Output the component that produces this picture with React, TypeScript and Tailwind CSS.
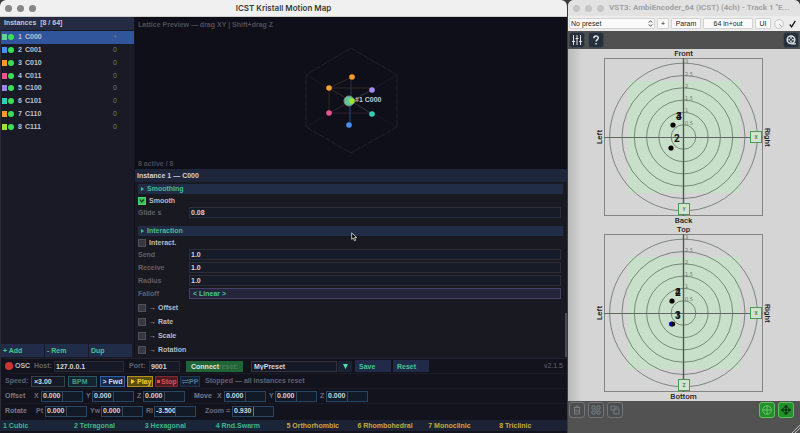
import React from "react";

const instances = [
  { name: "C000", color: "bg-[#5fd39a]", value: "+" },
  { name: "C001", color: "bg-[#4a90f0]", value: "0" },
  { name: "C010", color: "bg-[#f59a2c]", value: "0" },
  { name: "C011", color: "bg-[#e8558c]", value: "0" },
  { name: "C100", color: "bg-[#9b83f0]", value: "0" },
  { name: "C101", color: "bg-[#30cdb8]", value: "0" },
  { name: "C110", color: "bg-[#f59a2c]", value: "0" },
  { name: "C111", color: "bg-[#a2e036]", value: "0" },
];

const lattices = [
  "1 Cubic",
  "2 Tetragonal",
  "3 Hexagonal",
  "4 Rnd.Swarm",
  "5 Orthorhombic",
  "6 Rhombohedral",
  "7 Monoclinic",
  "8 Triclinic",
];

function TrafficLights({ color }: { color: string }) {
  return (
    <div className="flex gap-[5px]">
      {[0, 1, 2].map((i) => (
        <span key={i} className={"size-[7px] rounded-full " + color} />
      ))}
    </div>
  );
}

function Sidebar() {
  return (
    <aside className="flex w-[134px] shrink-0 flex-col border-l border-[#2c2c38] bg-[#191a25] pr-[2px]">
      <h2 className="-mr-[2px] h-[13px] bg-[#242b43] pl-[3px] leading-[12px] whitespace-pre text-[#c3c6d0]">
        Instances  [8 / 64]
      </h2>
      <ul className="mt-px -mr-[2px] grid h-[102px] grid-rows-8">
        {instances.map((item, i) => (
          <li key={item.name} className="min-h-0">
            <button
              className={
                "flex h-full w-full items-center pl-px text-left text-[#c0c2cc] " +
                (i === 0 ? "bg-[#30559b]" : "")
              }
            >
              <span className={"h-[6px] w-[5px] " + item.color} />
              <span className="ml-px size-[6px] rounded-full bg-[#3ddc5a]" />
              <span className="ml-[4px] w-[7px]">{i + 1}</span>
              <span>{item.name}</span>
              <span className="mr-[17px] ml-auto font-normal text-[#777988]">{item.value}</span>
            </button>
          </li>
        ))}
      </ul>
      <div className="mt-auto mb-px grid h-[13px] grid-cols-3 gap-px">
        {["+ Add", "- Rem", "Dup"].map((t) => (
          <button key={t} className="bg-[#212c49] pl-[2px] text-left leading-[12px] text-[#49c494]">
            {t}
          </button>
        ))}
      </div>
    </aside>
  );
}

const nodes = [
  { x: 61, y: 46, c: "#f59a2c" },
  { x: 38, y: 57, c: "#f5a02c" },
  { x: 81, y: 59, c: "#a58cf5" },
  { x: 38, y: 82, c: "#e8558c" },
  { x: 81, y: 83, c: "#30cdb8" },
  { x: 58, y: 94, c: "#4a90f0" },
];

function LatticePreview() {
  return (
    <section className="flex flex-col bg-[#0f0f1a] px-[3px] pt-px">
      <p className="h-[13px] leading-[13px] text-[#4c4d58]">Lattice Preview — drag XY | Shift+drag Z</p>
      <svg viewBox="0 0 120 126" className="mx-auto h-[126px] w-[120px]" aria-label="Lattice">
        <g fill="none" stroke="#22222e">
          <polygon points="60,17 106,44 106,96 60,122 15,96 15,44" strokeDasharray="6 1" />
          <path d="M15 44 60 70 106 44M15 96 60 70 106 96" stroke="#181823" />
        </g>
        <path d="M38 57 61 46M38 57V82M38 57H81M38 57 60 70" stroke="#30281f" fill="none" />
        <path d="M38 82H81M38 82 60 70" stroke="#2c2028" fill="none" />
        <path d="M60 46V70M60 70 81 83M60 70 81 59" stroke="#2b3340" fill="none" />
        <path d="M59 70V94" stroke="#264e7c" fill="none" />
        {nodes.map((n) => (
          <circle key={n.x + "-" + n.y} cx={n.x} cy={n.y} r="2.8" fill={n.c} />
        ))}
        <circle cx="58" cy="70" r="5" fill="#5fc99a" stroke="#77857f" />
        <circle cx="61" cy="70" r="2.8" fill="#a2e036" />
        <text x="64" y="71" fontSize="7" fill="#c8cad0" fontWeight="bold">
          #1 C000
        </text>
      </svg>
      <p className="h-[12px] leading-[14px] text-[#464752]">8 active / 8</p>
    </section>
  );
}

function SectionBar({ children }: { children: string }) {
  return (
    <h3 className="flex h-[10px] items-center gap-[3px] bg-[#212c47] pl-[3px] text-[#46bd90]">
      <svg viewBox="0 0 3 4" className="h-[4px] w-[3px]">
        <path d="M0 0 3 2 0 4z" fill="currentColor" />
      </svg>
      {children}
    </h3>
  );
}

function Check({ label, checked = false }: { label: string; checked?: boolean }) {
  return (
    <label className="flex h-[13px] items-center gap-[3px] text-[#b9bbc3]">
      <span className="relative flex size-[8px]">
        <input
          type="checkbox"
          defaultChecked={checked}
          className="peer size-[8px] appearance-none border border-[#50505a] bg-[#37373f] checked:border-[#45d268] checked:bg-[#38c95a]"
        />
        <svg viewBox="0 0 8 8" className="pointer-events-none absolute inset-0 hidden peer-checked:block">
          <path d="M2 2.5 3.7 5 6 2.5" stroke="#123b1c" strokeWidth="1.3" fill="none" />
        </svg>
      </span>
      {label}
    </label>
  );
}

function Param({ label, value }: { label: string; value: string }) {
  return (
    <label className="flex h-[11px] items-center text-[#5f606c]">
      <span className="w-[51px]">{label}</span>
      <input
        defaultValue={value}
        className="h-[11px] min-w-0 flex-1 border border-[#2b2d39] bg-[#171b28] px-px text-[#d5d7dc]"
      />
    </label>
  );
}

function Inspector() {
  return (
    <section className="relative flex-1 bg-[#191922]">
      <h2 className="h-[14px] border-b border-[#171b26] bg-[#202639] pl-[2px] leading-[14px] text-[#d0d2d8]">
        Instance 1 — C000
      </h2>
      <div className="flex flex-col pr-[4px] pl-[3px]">
        <div className="pt-px">
          <SectionBar>Smoothing</SectionBar>
        </div>
        <div className="pr-[2px] pb-[8px]">
          <Check label="Smooth" checked />
          <Param label="Glide s" value="0.08" />
        </div>
        <SectionBar>Interaction</SectionBar>
        <div className="flex flex-col pr-[2px]">
          <Check label="Interact." />
          <div className="flex flex-col gap-[2px]">
            <Param label="Send" value="1.0" />
            <Param label="Receive" value="1.0" />
            <Param label="Radius" value="1.0" />
            <label className="flex h-[11px] items-center text-[#5f606c]">
              <span className="w-[51px]">Falloff</span>
              <select className="h-[11px] min-w-0 flex-1 appearance-none border border-[#433f66] bg-[#24243a] px-[3px] leading-[9px] text-[#49c494]">
                <option>&lt; Linear &gt;</option>
              </select>
            </label>
          </div>
        </div>
        <div className="flex flex-col gap-px pt-[2px]">
          {["Offset", "Rate", "Scale", "Rotation"].map((t) => (
            <Check key={t} label={"→ " + t} />
          ))}
        </div>
      </div>
      <span className="absolute right-0 bottom-px h-[44px] w-[2px] bg-[#4b4b55]" />
      <svg viewBox="0 0 8 11" className="absolute top-[63px] left-[216px] h-[10px] w-[7px]">
        <path d="M.8.8V8.2L2.6 6.6 4 9.8 5.4 9.2 4.1 6.1H6.6z" fill="#050505" stroke="#e6e6e6" strokeWidth=".9" />
      </svg>
    </section>
  );
}

function Num({
  label,
  value,
  labelClass,
  caret = false,
}: {
  label: string;
  value: string;
  labelClass: string;
  caret?: boolean;
}) {
  return (
    <label className="flex items-center text-[#6b6d7a]">
      <span className={labelClass}>{label}</span>
      <span className="flex h-[11px] w-[42px] border border-[#264663] bg-[#121a28]">
        <input
          defaultValue={value}
          className={
            "h-[9px] w-[21px] border-r bg-transparent pl-px text-[#d5d7dc] " +
            (caret ? "border-[#c2503f]" : "border-[#33475d]")
          }
        />
      </span>
    </label>
  );
}

function Transport() {
  return (
    <div className="border-l border-[#2c2c38] bg-[#13131d] pb-[2px] pl-[4px]">
      <div className="flex h-[15px] items-center border-t border-[#22222e] text-[#60626e]">
        <span className="size-[8px] rounded-full bg-[#c93535]" />
        <span className="ml-[2px] w-[19px] text-[#b9bbc3]">OSC</span>
        <label className="flex items-center">
          <span className="w-[20px]">Host:</span>
          <input defaultValue="127.0.0.1" className="h-[11px] w-[70px] border border-[#2a2b37] bg-[#151a26] px-px text-[#d5d7dc]" />
        </label>
        <label className="ml-[5px] flex items-center">
          <span className="w-[20px]">Port:</span>
          <input defaultValue="9001" className="h-[11px] w-[31px] border border-[#2a2b37] bg-[#151a26] px-px text-[#d5d7dc]" />
        </label>
        <button className="ml-[6px] h-[11px] w-[57px] bg-[#1f6535] pl-[5px] text-left leading-[11px] text-[#dfe6e0]">
          Connect<span className="text-[#4b7a59]">reset:</span>
        </button>
        <input
          aria-label="Preset"
          defaultValue="MyPreset"
          className="ml-[8px] h-[11px] w-[86px] border border-[#33343f] bg-[#151a26] px-[2px] text-[#d5d7dc]"
        />
        <button aria-label="Open preset list" className="ml-px flex h-[11px] w-[14px] items-center justify-center bg-[#1b2234]">
          <svg viewBox="0 0 5 5" className="size-[5px]">
            <path d="M0 0H5L2.5 5z" fill="#4fe0ae" />
          </svg>
        </button>
        <button className="ml-[3px] h-[12px] w-[36px] bg-[#212b49] pl-[4px] text-left leading-[11px] text-[#49c494]">Save</button>
        <button className="ml-[2px] h-[12px] w-[36px] bg-[#212b49] pl-[4px] text-left leading-[11px] text-[#49c494]">Reset</button>
        <span className="mr-[4px] ml-auto font-normal">v2.1.5</span>
      </div>
      <div className="flex h-[15px] items-center border-t border-[#1b1b27] text-[#60626e]">
        <label className="flex items-center">
          <span className="w-[26px]">Speed:</span>
          <input defaultValue="×3.00" className="h-[11px] w-[34px] border border-[#34424c] bg-[#151a26] px-[2px] text-[#d5d7dc]" />
        </label>
        <button className="ml-[3px] h-[11px] w-[29px] border border-[#2c5563] bg-[#152230] pl-[3px] text-left leading-[9px] text-[#459b8c]">BPM</button>
        <button className="ml-[3px] h-[11px] w-[25px] border border-[#31619f] bg-[#16284a] text-center leading-[9px] whitespace-nowrap text-[#d5dcea]">
          &gt; Fwd
        </button>
        <button className="ml-[2px] flex h-[11px] w-[26px] items-center gap-[2px] border border-[#b3921c] bg-[#5c4b0e] pl-[3px] leading-[9px] text-[#f2cf27]">
          <svg viewBox="0 0 4 5" className="h-[5px] w-[4px]"><path d="M0 0 4 2.5 0 5z" fill="currentColor" /></svg>
          Play
        </button>
        <button className="ml-[2px] flex h-[11px] w-[23px] items-center gap-px border border-[#7e2a34] bg-[#4d1a22] pl-px leading-[9px] text-[#e04f4f]">
          <span className="size-[3px] shrink-0 bg-current" />
          Stop
        </button>
        <button className="ml-[2px] flex h-[11px] w-[20px] items-center border border-[#21344d] bg-[#141e2e] pl-px leading-[9px] text-[#55779a]">
          <svg viewBox="0 0 7 5" className="h-[5px] w-[7px] shrink-0">
            <path d="M0 1.5H6.5L5 .3M7 3.5H.5L2 4.7" fill="none" stroke="currentColor" strokeWidth=".8" />
          </svg>
          PP
        </button>
        <span className="ml-[5px]">Stopped — all instances reset</span>
      </div>
      <div className="flex h-[15px] items-center border-t border-[#1b1b27] text-[#7a7c88]">
        <span className="w-[29px]">Offset</span>
        <Num label="X" value="0.000" labelClass="w-[7px]" />
        <Num label="Y" value="0.000" labelClass="ml-[3px] w-[6px]" />
        <Num label="Z" value="0.000" labelClass="ml-[3px] w-[6px]" />
        <span className="ml-[9px] w-[23px]">Move</span>
        <Num label="X" value="0.000" labelClass="w-[7px]" />
        <Num label="Y" value="0.000" labelClass="ml-[3px] w-[6px]" />
        <Num label="Z" value="0.000" labelClass="ml-[3px] w-[6px]" />
      </div>
      <div className="flex h-[15px] items-center border-t border-[#1b1b27] text-[#7a7c88]">
        <span className="w-[31px]">Rotate</span>
        <Num label="Pt" value="0.000" labelClass="w-[9px]" />
        <Num label="Yw" value="0.000" labelClass="ml-[3px] w-[11px]" />
        <Num label="Rl" value="-3.500" labelClass="ml-[3px] w-[8px]" />
        <Num label="Zoom =" value="0.930" labelClass="ml-[9px] w-[27px]" caret />
      </div>
    </div>
  );
}

function MotionMap() {
  return (
    <main className="flex min-w-0 flex-1 flex-col overflow-hidden rounded-t-[6px] bg-[#13131d] font-['Liberation_Sans',Arial,sans-serif] text-[7px] leading-[10px] font-bold">
      <header className="grid h-[17px] grid-cols-[1fr_auto_1fr] items-center border-b border-[#cfcfcf] bg-[#f0f0f0] px-[5px]">
        <TrafficLights color="bg-[#878787]" />
        <h1 className="font-['Inter',sans-serif] text-[8px] leading-[16px] font-semibold text-[#3a3a3a]">ICST Kristall Motion Map</h1>
      </header>
      <div className="flex flex-1">
        <Sidebar />
        <div className="ml-px flex min-w-0 flex-1 flex-col">
          <LatticePreview />
          <Inspector />
        </div>
      </div>
      <Transport />
      <nav className="mb-[2px] grid h-[11px] grid-cols-8">
        {lattices.map((t, i) => (
          <button
            key={t}
            className={
              "pl-[3px] text-left leading-[10px] whitespace-nowrap " +
              (i < 4 ? "bg-[#1a2538] text-[#3fb58d]" : "bg-[#1c2133] text-[#c9a93b]")
            }
          >
            {t}
          </button>
        ))}
      </nav>
    </main>
  );
}

type Source = { x: number; y: number; label: string; ghost?: string; lx: number; ly: number; blue?: boolean };

function Radar({ top, bottom, handle, sources }: { top: string; bottom: string; handle: string; sources: Source[] }) {
  const rings = [1, 2, 3, 4, 5, 6];
  return (
    <figure className="grid grid-cols-[1fr_159px_1fr] grid-rows-[9px_158px_9px] pr-px font-['Roboto',sans-serif] text-[8px] leading-[9px] font-medium text-[#222]">
      <span className="col-start-2 text-center">{top}</span>
      <span className="col-start-1 row-start-2 rotate-180 justify-self-end text-center [writing-mode:vertical-rl]">Left</span>
      <svg viewBox="0 0 159 158" className="col-start-2 row-start-2 h-[158px] w-[159px]">
        <rect x=".5" y=".5" width="158" height="157" fill="none" stroke="#858585" />
        <rect x="24" y="23" width="112" height="112" fill="#c8dfc9" />
        <g fill="none" stroke="#4d5a50" strokeOpacity=".65">
          {rings.map((k) => (
            <circle key={k} cx="79.5" cy="79" r={k * 12.3} />
          ))}
        </g>
        <path d="M0 79.5H159" stroke="#5d685f" />
        <path d="M79.5 0V158" stroke="#4f5a52" strokeWidth="1.4" />
        <g fontSize="5" fontWeight="400" fill="#6b746d" fontFamily="DejaVu Sans, sans-serif">
          {rings.map((k) => (
            <text key={k} x="81" y={79 - k * 12.3}>
              {k / 2}
            </text>
          ))}
        </g>
        {sources.map((s) => (
          <g key={s.label}>
            <circle cx={s.x} cy={s.y} r="2.6" fill="#000" />
            {s.blue && <circle cx={s.x - 1} cy={s.y} r="2.2" fill="#1010d8" />}
            {s.blue && <circle cx={s.x + 1} cy={s.y} r="2.2" fill="#000" />}
            <text x={s.lx} y={s.ly} fontSize="10" fontWeight="700" fill="#111">{s.label}</text>
            {s.ghost && <text x={s.lx} y={s.ly} fontSize="10" fontWeight="500" fill="#111">{s.ghost}</text>}
          </g>
        ))}
        <g fill="#d3e2d3" stroke="#4c9a4f">
          <rect x="146.5" y="73.5" width="11" height="11" />
          <rect x="74.5" y="145.5" width="11" height="11" />
        </g>
        <g fontSize="5" fontWeight="700" fill="#3f8f43" textAnchor="middle">
          <text x="152" y="81">X</text>
          <text x="80" y="153">{handle}</text>
        </g>
      </svg>
      <span className="col-start-3 row-start-2 justify-self-start text-center [writing-mode:vertical-rl]">Right</span>
      <figcaption className="col-start-2 text-center">{bottom}</figcaption>
    </figure>
  );
}

function IconButton({ label, tone, children }: { label: string; tone: string; children: React.ReactNode }) {
  return (
    <button aria-label={label} className={"flex size-[16px] items-center justify-center rounded-[3px] border " + tone}>
      <svg viewBox="0 0 12 12" className="size-[12px]" fill="none" stroke="currentColor">
        {children}
      </svg>
    </button>
  );
}

const navy = "border-[#3e4850] bg-[#25303b] text-[#dfe3e6]";
const dim = "border-[#747474] bg-[#4a4e51] text-[#757a7e]";
const green = "border-[#56c659] bg-[#25902b]";
const small = "h-[11px] rounded-[1px] border border-[#d2d2d2] bg-[#fafafa] leading-[9px]";

function Encoder() {
  return (
    <aside className="flex w-[232px] shrink-0 flex-col overflow-hidden rounded-t-[6px] bg-[#d5d5d5] font-['Liberation_Sans',Arial,sans-serif]">
      <header className="flex h-[16px] items-center gap-[5px] bg-[#e2e2e2] pl-[5px]">
        <TrafficLights color="bg-[#c6c6c6]" />
        <h2 className="font-['Roboto',sans-serif] text-[8px] font-bold whitespace-nowrap text-[#a3a3a3]">VST3: AmbiEncoder_64 (ICST) (4ch) - Track 1 "E...</h2>
      </header>
      <div className="flex h-[15px] items-center bg-[#ececec] pl-px text-[7px] text-[#1c1c1c]">
        <span className="relative flex">
          <select aria-label="Preset" className={"w-[86px] appearance-none pl-px " + small}>
            <option>No preset</option>
          </select>
          <svg viewBox="0 0 5 8" className="pointer-events-none absolute top-[2px] right-[2px] h-[7px] w-[5px]">
            <path d="M.5 3 2.5.8 4.5 3M.5 5 2.5 7.2 4.5 5" fill="none" stroke="#333" />
          </svg>
        </span>
        <button className={"ml-[2px] w-[12px] " + small}>+</button>
        <button className={"ml-[2px] w-[30px] " + small}>Param</button>
        <button className={"ml-[2px] w-[50px] " + small}>64 in+out</button>
        <button className={"ml-[2px] w-[16px] " + small}>UI</button>
        <svg viewBox="0 0 10 10" className="ml-[3px] size-[10px]">
          <circle cx="5" cy="5" r="4.4" fill="#f4f4f4" stroke="#bdbdbd" strokeWidth=".8" />
          <path d="M5 5 8.2 8" stroke="#999" strokeWidth=".8" />
        </svg>
        <label className="ml-[5px] flex">
          <input type="checkbox" defaultChecked aria-label="Enabled" className="peer size-0 appearance-none" />
          <svg viewBox="0 0 7 8" className="hidden h-[8px] w-[7px] peer-checked:block">
            <path d="M.8 4.5 2.6 6.8 6.3.8" fill="none" stroke="#111" strokeWidth="1.3" />
          </svg>
        </label>
      </div>
      <div className="flex h-[18px] items-center gap-[3px] bg-[#505050] px-px">
        <IconButton label="Settings" tone={navy}>
          <path d="M2.5 1V11M6 1V11M9.5 1V11M1 7.5H4M4.5 4.5H7.5M8 7.5H11" />
        </IconButton>
        <IconButton label="Help" tone={navy}>
          <path d="M3.8 4.2C3.8 1.2 8.4 1.3 8.3 4 8.2 5.6 6.1 5.7 6.1 7.6M6.1 9V10.6" strokeWidth="1.5" />
        </IconButton>
        <span className="ml-auto">
          <IconButton label="Recorder" tone={navy}>
            <circle cx="6" cy="5.7" r="3.8" strokeWidth="1.5" />
            <g fill="currentColor" stroke="none">
              <circle cx="6" cy="3.9" r=".9" />
              <circle cx="6" cy="7.5" r=".9" />
              <circle cx="4.2" cy="5.7" r=".9" />
              <circle cx="7.8" cy="5.7" r=".9" />
            </g>
            <path d="M6.5 9.8H11" strokeWidth="1.2" />
          </IconButton>
        </span>
      </div>
      <div className="flex-1 bg-linear-to-r from-[#b9b9b9] to-[#d5d5d5] to-[14px]">
        <Radar
          top="Front"
          bottom="Back"
          handle="Y"
          sources={[
            { x: 69, y: 67, label: "3", ghost: "4", lx: 72, ly: 62 },
            { x: 67, y: 90, label: "2", lx: 70, ly: 84 },
          ]}
        />
        <Radar
          top="Top"
          bottom="Bottom"
          handle="Z"
          sources={[
            { x: 68, y: 67, label: "2", ghost: "4", lx: 71, ly: 62 },
            { x: 68, y: 90, label: "3", ghost: "1", lx: 71, ly: 85, blue: true },
          ]}
        />
      </div>
      <footer className="flex h-[32px] items-start gap-[3px] bg-[#525252] pt-px pr-[3px] pl-px">
        <IconButton label="Delete" tone={dim}>
          <path d="M2.5 3.5H9.5M5 3V2H7V3M3.5 4V10H8.5V4M5 5.5V8.5M7 5.5V8.5" />
        </IconButton>
        <IconButton label="Group" tone={dim}>
          <path d="M2 2H5V5H2zM7 2H10V5H7zM2 7H5V10H2zM7 7H10V10H7zM5 5 7 7" />
        </IconButton>
        <IconButton label="Duplicate" tone={dim}>
          <path d="M2 2H6V6H2zM5 5H10V10H5zM7 3H9.5" />
        </IconButton>
        <span className="ml-auto">
          <IconButton label="Sphere view" tone={green + " text-[#74d277]"}>
            <circle cx="6" cy="6" r="4.3" strokeWidth=".8" />
            <path d="M1.7 6H10.3M6 1.7V10.3" strokeWidth=".8" />
          </IconButton>
        </span>
        <IconButton label="Move sources" tone={green + " text-[#0c2b10]"}>
          <path
            d="M6 1 8 3.5H4zM6 11 4 8.5H8zM1 6 3.5 4V8zM11 6 8.5 8V4zM4.6 6A1.4 1.4 0 1 0 7.4 6 1.4 1.4 0 1 0 4.6 6z"
            fill="currentColor"
            strokeWidth=".4"
          />
        </IconButton>
        <svg viewBox="0 0 8 8" className="-mr-[3px] -ml-[5px] size-[8px] self-end">
          <path d="M0 8 8 0M3 8 8 3" stroke="#c9c9c9" strokeWidth=".9" />
        </svg>
      </footer>
    </aside>
  );
}

export default function App() {
  return (
    <div className="flex min-h-screen gap-px bg-[#3b3b3b]">
      <MotionMap />
      <Encoder />
    </div>
  );
}
